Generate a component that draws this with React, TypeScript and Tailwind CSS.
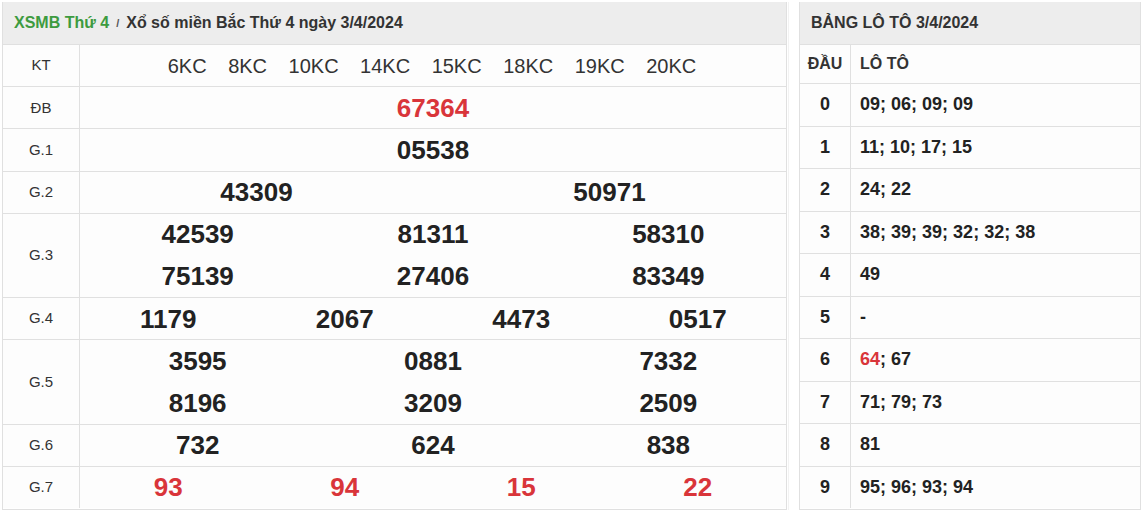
import React from 'react';

const font = { fontFamily: '"Liberation Sans", Arial, sans-serif' };

type Row = { label: string; lines: string[][]; red?: boolean };

const rows: Row[] = [
  { label: 'ĐB', lines: [['67364']], red: true },
  { label: 'G.1', lines: [['05538']] },
  { label: 'G.2', lines: [['43309', '50971']] },
  { label: 'G.3', lines: [['42539', '81311', '58310'], ['75139', '27406', '83349']] },
  { label: 'G.4', lines: [['1179', '2067', '4473', '0517']] },
  { label: 'G.5', lines: [['3595', '0881', '7332'], ['8196', '3209', '2509']] },
  { label: 'G.6', lines: [['732', '624', '838']] },
  { label: 'G.7', lines: [['93', '94', '15', '22']], red: true },
];

const loto: { dau: string; items: { v: string; red?: boolean }[] }[] = [
  { dau: '0', items: [{ v: '09' }, { v: '06' }, { v: '09' }, { v: '09' }] },
  { dau: '1', items: [{ v: '11' }, { v: '10' }, { v: '17' }, { v: '15' }] },
  { dau: '2', items: [{ v: '24' }, { v: '22' }] },
  { dau: '3', items: [{ v: '38' }, { v: '39' }, { v: '39' }, { v: '32' }, { v: '32' }, { v: '38' }] },
  { dau: '4', items: [{ v: '49' }] },
  { dau: '5', items: [{ v: '-' }] },
  { dau: '6', items: [{ v: '64', red: true }, { v: '67' }] },
  { dau: '7', items: [{ v: '71' }, { v: '79' }, { v: '73' }] },
  { dau: '8', items: [{ v: '81' }] },
  { dau: '9', items: [{ v: '95' }, { v: '96' }, { v: '93' }, { v: '94' }] },
];

const cols: Record<number, string> = {
  1: 'grid-cols-1',
  2: 'grid-cols-2',
  3: 'grid-cols-3',
  4: 'grid-cols-4',
};

export default function App() {
  return (
    <div className="flex bg-white pt-[2px] pl-[2px] w-[1143px] h-[510px] overflow-hidden" style={font}>
      {/* Kết quả */}
      <div className="w-[785px] border border-t-0 border-[#e0e0e0]">
        <div className="h-[42px] bg-[#ededed] flex items-center px-[11px] text-[16px] font-bold text-[#333]">
          <span className="text-[#3d9b40]">XSMB Thứ 4</span>
          <span className="mx-[7px] text-[11px] text-[#555]">/</span>
          <span>Xổ số miền Bắc Thứ 4 ngày 3/4/2024</span>
        </div>
        <div className="flex h-[42.2px] border-t border-[#e0e0e0] bg-[#fdfdfd]">
          <div className="w-[77px] border-r border-[#e0e0e0] flex items-center justify-center text-[15px] text-[#333]">KT</div>
          <div className="flex-1 flex items-center justify-center gap-[21.5px] text-[20px] text-[#333] pr-[2px]">
            {['6KC', '8KC', '10KC', '14KC', '15KC', '18KC', '19KC', '20KC'].map((k) => (
              <span key={k}>{k}</span>
            ))}
          </div>
        </div>
        {rows.map((r) => (
          <div key={r.label} className="flex border-t border-[#e0e0e0] bg-[#fdfdfd]">
            <div className="w-[77px] border-r border-[#e0e0e0] flex items-center justify-center text-[15px] text-[#333]">
              {r.label}
            </div>
            <div className="flex-1 flex flex-col">
              {r.lines.map((line, i) => (
                <div key={i} className={`grid ${cols[line.length]} ${i === 0 ? 'h-[41.2px]' : 'h-[42.2px]'} items-center`}>
                  {line.map((n, j) => (
                    <div
                      key={j}
                      className={`text-center text-[26px] font-bold leading-none ${r.red ? 'text-[#d9353a]' : 'text-[#222]'}`}
                    >
                      {n}
                    </div>
                  ))}
                </div>
              ))}
            </div>
          </div>
        ))}
      </div>

      <div className="w-[3px] ml-[1px] border-l border-[#f2f2f2]" />

      {/* Bảng lô tô */}
      <div className="ml-[8px] w-[342px] border border-t-0 border-[#e0e0e0]">
        <div className="h-[42px] bg-[#ededed] flex items-center px-[11px] text-[16px] font-bold text-[#333]">
          BẢNG LÔ TÔ 3/4/2024
        </div>
        <div className="flex h-[39px] border-t border-[#e0e0e0] bg-[#fdfdfd] text-[16px] font-bold text-[#333]">
          <div className="w-[51px] border-r border-[#e0e0e0] flex items-center justify-center">ĐẦU</div>
          <div className="flex-1 flex items-center pl-[9px]">LÔ TÔ</div>
        </div>
        {loto.map((l) => (
          <div key={l.dau} className="flex h-[42.5px] border-t border-[#e0e0e0] bg-[#fdfdfd] text-[18px] font-bold text-[#222]">
            <div className="w-[51px] border-r border-[#e0e0e0] flex items-center justify-center">{l.dau}</div>
            <div className="flex-1 flex items-center pl-[9px]">
              {l.items.map((it, i) => (
                <React.Fragment key={i}>
                  {i > 0 && <span>;&nbsp;</span>}
                  <span className={it.red ? 'text-[#d9353a]' : ''}>{it.v}</span>
                </React.Fragment>
              ))}
            </div>
          </div>
        ))}
      </div>
    </div>
  );
}
